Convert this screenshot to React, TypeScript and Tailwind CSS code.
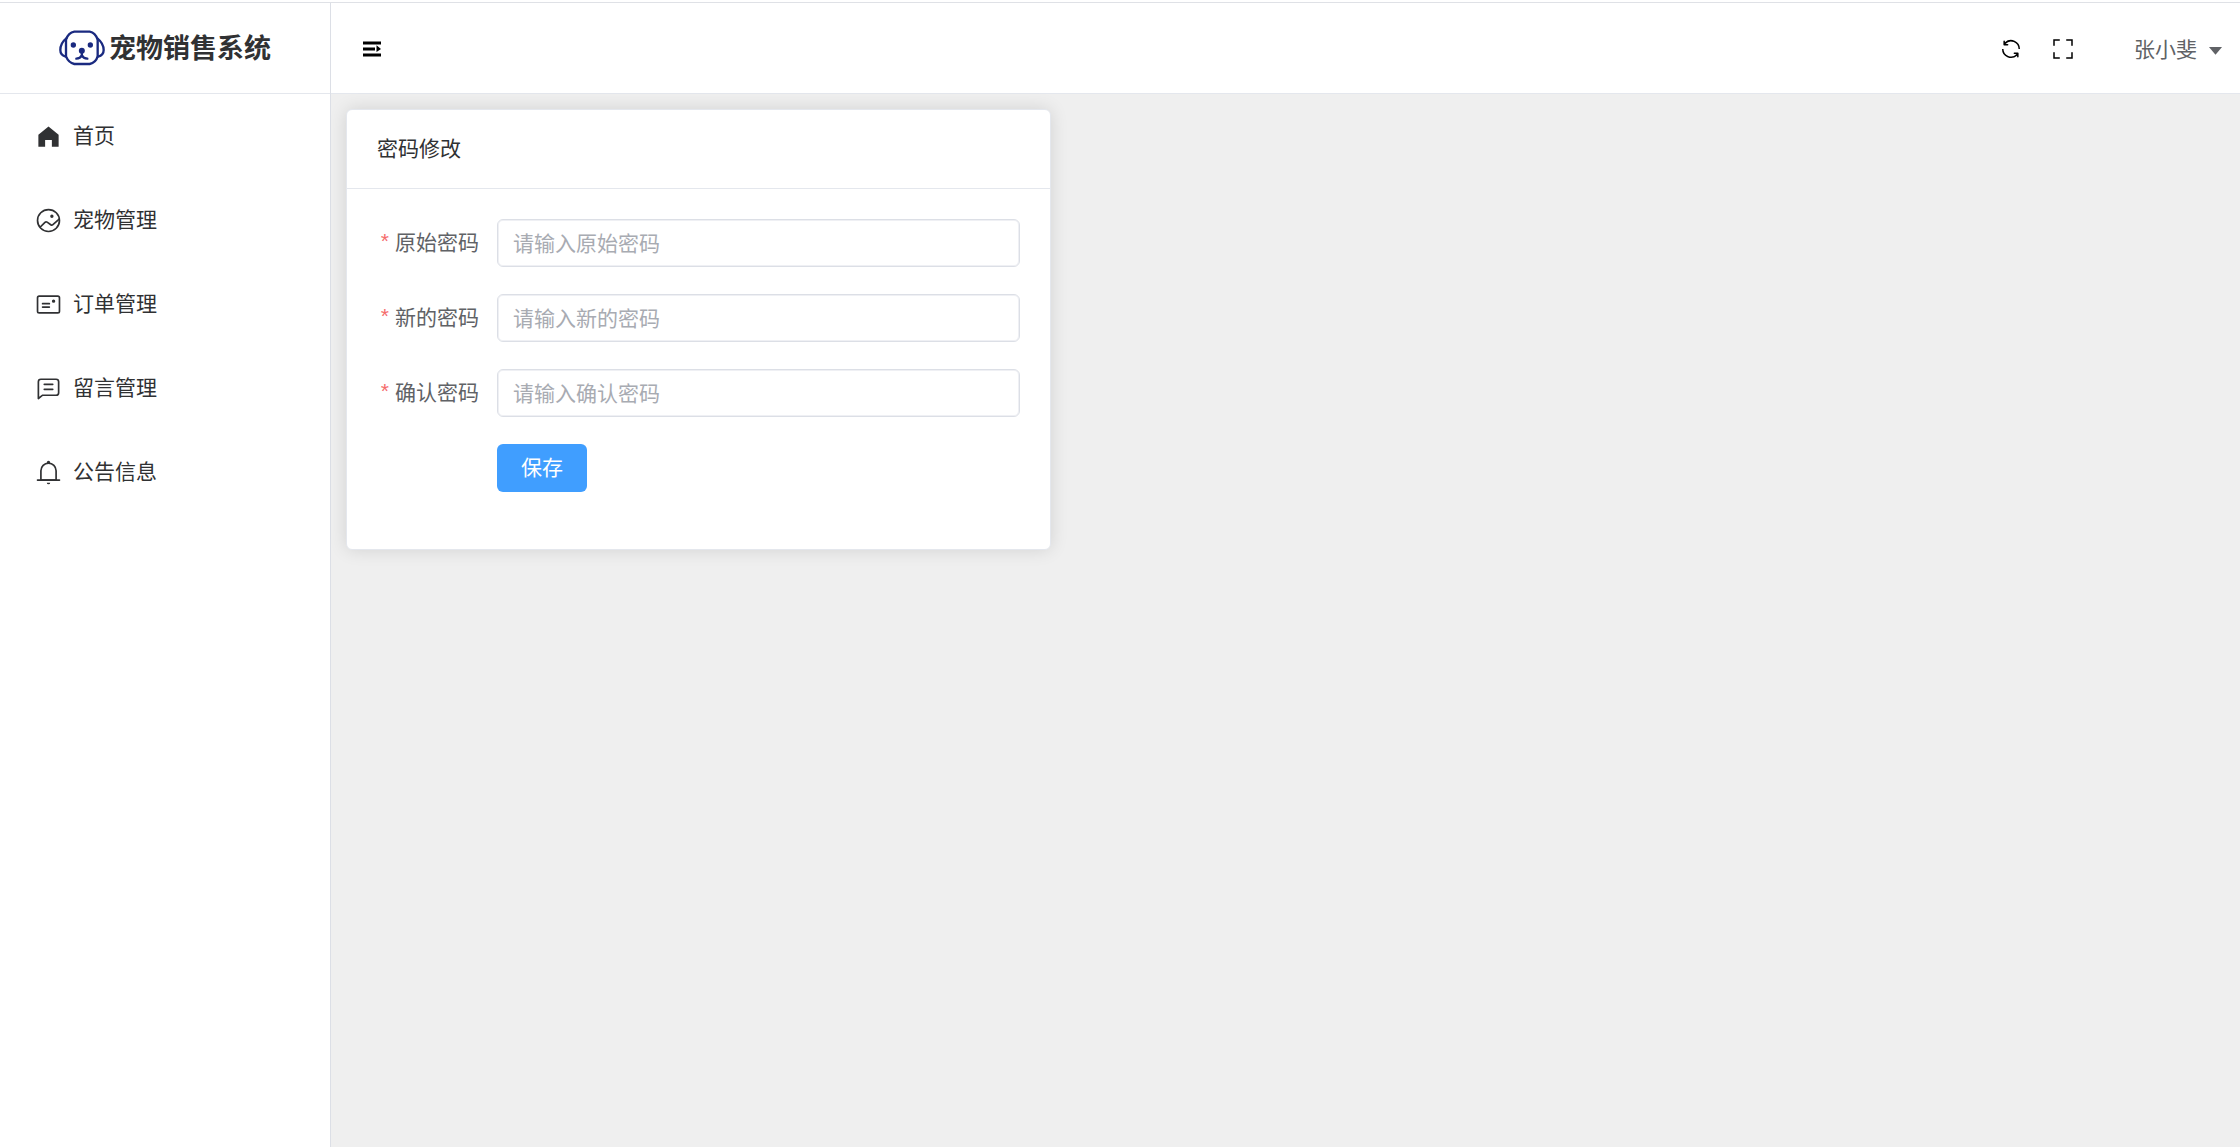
import React from "react";

const menuItems = [
  {
    label: "首页",
    paths: [
      "M512 128 128 447.936V896h255.936V640H640v256h255.936V447.936z",
    ],
  },
  {
    label: "宠物管理",
    paths: [
      "M512 128a384 384 0 1 0 0 768 384 384 0 0 0 0-768m0-64a448 448 0 1 1 0 896 448 448 0 0 1 0-896",
      "M640 288q64 0 64 64t-64 64q-64 0-64-64t64-64M214.656 790.656l-45.312-45.312 185.664-185.6a96 96 0 0 1 123.712-10.24l138.24 98.688a32 32 0 0 0 39.872-2.176L906.688 422.4l42.624 47.744L699.52 693.696a96 96 0 0 1-119.808 6.592l-138.24-98.752a32 32 0 0 0-41.152 3.456l-185.664 185.6z",
    ],
  },
  {
    label: "订单管理",
    paths: [
      "M160 224a32 32 0 0 0-32 32v512a32 32 0 0 0 32 32h704a32 32 0 0 0 32-32V256a32 32 0 0 0-32-32zm0-64h704a96 96 0 0 1 96 96v512a96 96 0 0 1-96 96H160a96 96 0 0 1-96-96V256a96 96 0 0 1 96-96",
      "M704 320a64 64 0 1 1 0 128 64 64 0 0 1 0-128M288 448h256q32 0 32 32t-32 32H288q-32 0-32-32t32-32m0 128h256q32 0 32 32t-32 32H288q-32 0-32-32t32-32",
    ],
  },
  {
    label: "留言管理",
    paths: [
      "M160 826.88 273.536 736H800a64 64 0 0 0 64-64V256a64 64 0 0 0-64-64H224a64 64 0 0 0-64 64zM296 800 147.968 918.4A32 32 0 0 1 96 893.44V256a128 128 0 0 1 128-128h576a128 128 0 0 1 128 128v416a128 128 0 0 1-128 128z",
      "M352 512h320q32 0 32 32t-32 32H352q-32 0-32-32t32-32m0-192h320q32 0 32 32t-32 32H352q-32 0-32-32t32-32",
    ],
  },
  {
    label: "公告信息",
    paths: [
      "M512 64a64 64 0 0 1 64 64v64H448v-64a64 64 0 0 1 64-64",
      "M256 768h512V448a256 256 0 1 0-512 0zm256-640a320 320 0 0 1 320 320v384H192V448a320 320 0 0 1 320-320",
      "M96 768h832q32 0 32 32t-32 32H96q-32 0-32-32t32-32m352 128h128a64 64 0 0 1-128 0",
    ],
  },
];

const expandIcon = [
  "M128 192h768v128H128zm0 256h512v128H128zm0 256h768v128H128zm576-352 192 160-192 128z",
];
const refreshIcon = [
  "M771.776 794.88A384 384 0 0 1 128 512h64a320 320 0 0 0 555.712 216.448H654.72a32 32 0 1 1 0-64h149.056a32 32 0 0 1 32 32v148.928a32 32 0 1 1-64 0v-50.56zM276.288 295.616h92.992a32 32 0 0 1 0 64H220.16a32 32 0 0 1-32-32V178.56a32 32 0 0 1 64 0v50.56A384 384 0 0 1 896.128 512h-64a320 320 0 0 0-555.776-216.384z",
];
const fullScreenIcon = [
  "m160 96.064 192 .192a32 32 0 0 1 0 64l-192-.192V352a32 32 0 0 1-64 0V96h64zm0 831.872V928H96V672a32 32 0 1 1 64 0v191.936l192-.192a32 32 0 1 1 0 64zM864 96.064V96h64v256a32 32 0 1 1-64 0V160.064l-192 .192a32 32 0 1 1 0-64zm0 831.872-192-.192a32 32 0 0 1 0-64l192 .192V672a32 32 0 1 1 64 0v256h-64z",
];
const caretIcon = ["m192 384 320 384 320-384z"];

const fields = [
  { id: "oldPassword", label: "原始密码", placeholder: "请输入原始密码" },
  { id: "newPassword", label: "新的密码", placeholder: "请输入新的密码" },
  { id: "confirmPassword", label: "确认密码", placeholder: "请输入确认密码" },
];

const Icon: React.FC<{ paths: string[]; className: string }> = ({
  paths,
  className,
}) => (
  <svg
    className={className}
    viewBox="0 0 1024 1024"
    fill="currentColor"
    aria-hidden="true"
  >
    {paths.map((d) => (
      <path key={d} d={d} />
    ))}
  </svg>
);

const DogLogo: React.FC = () => (
  <svg
    className="h-9 w-[46px] shrink-0"
    viewBox="0 0 138 108"
    fill="none"
    stroke="#1a2a80"
    strokeWidth="7"
    strokeLinecap="round"
    aria-hidden="true"
  >
    <path d="M46 5H92C104 7 112 17 116 29V79C113 89 105 99 92 102H46C33 99 25 89 21 79V29C25 17 33 7 46 5Z" />
    <path d="M22 25C12 33 4 46 4 60C4 69 10 77 20 80" />
    <path d="M115 25C125 33 134 46 134 60C134 69 128 77 117 80" />
    <circle cx="43" cy="45" r="8" fill="#1a2a80" stroke="none" />
    <circle cx="94" cy="45" r="8" fill="#1a2a80" stroke="none" />
    <circle cx="68.500" cy="62" r="9" fill="#1a2a80" stroke="none" />
    <path d="M68.500 64V76M52 86Q64 86 68.500 76Q73 86 85 86" />
  </svg>
);

const Sidebar: React.FC = () => {
  return (
    <aside className="w-[331px] shrink-0 border-r border-[#dcdfe6] bg-white">
      <div className="flex h-[91px] items-center justify-center gap-1 border-b border-[#e4e7ed] pb-px">
        <DogLogo />
        <h1 className="text-[27px] font-bold">宠物销售系统</h1>
      </div>
      <nav>
        {menuItems.map((item) => (
          <a
            key={item.label}
            href="#"
            className="flex h-[84px] items-center px-[30px]"
          >
            <span className="mr-[7px] flex w-9 justify-center">
              <Icon paths={item.paths} className="size-[27px]" />
            </span>
            <span className="pb-0.5">{item.label}</span>
          </a>
        ))}
      </nav>
    </aside>
  );
};

const Header: React.FC = () => {
  return (
    <header className="flex h-[91px] items-center border-b border-[#e4e7ed] bg-white pt-0.5 pr-[14px] pl-[29px]">
      <button type="button" aria-label="展开菜单" className="text-black">
        <Icon paths={expandIcon} className="size-6" />
      </button>
      <div className="ml-auto flex items-center text-black">
        <button type="button" aria-label="刷新" className="mr-7">
          <Icon paths={refreshIcon} className="size-6" />
        </button>
        <button type="button" aria-label="全屏" className="mr-[59px]">
          <Icon paths={fullScreenIcon} className="size-6" />
        </button>
        <button
          type="button"
          className="flex items-center gap-2 text-[#606266]"
        >
          张小斐
          <Icon paths={caretIcon} className="size-[21px]" />
        </button>
      </div>
    </header>
  );
};

const PasswordForm: React.FC = () => {
  return (
    <section className="w-3/8 rounded-md border border-[#e4e7ed] bg-white shadow-[0_0_18px_rgba(0,0,0,0.12)]">
      <h2 className="border-b border-[#e4e7ed] px-[30px] pt-[22px] pb-[26px] leading-[30px]">
        密码修改
      </h2>
      <form className="space-y-[27px] px-[30px] pt-[30px] pb-[57px]">
        {fields.map((field) => (
          <div key={field.id} className="flex">
            <label
              htmlFor={field.id}
              className="flex h-12 w-30 shrink-0 items-center justify-end pr-[18px] pb-0.5 text-[#606266]"
            >
              <span className="mr-1.5 pb-0.5 font-['Liberation_Sans',sans-serif] text-[#f56c6c]">
                *
              </span>
              {field.label}
            </label>
            <input
              id={field.id}
              type="password"
              placeholder={field.placeholder}
              className="h-12 min-w-0 flex-1 rounded-md border border-[#dcdfe6] px-[15px] pb-0.5 shadow-[inset_0_0_0_1px_#eff0f4] outline-none placeholder:text-[#a8abb2] focus:border-[#409eff]"
            />
          </div>
        ))}
        <div className="pl-30">
          <button
            type="submit"
            className="h-12 rounded-md bg-[#409eff] px-6 pb-0.5 text-white"
          >
            保存
          </button>
        </div>
      </form>
    </section>
  );
};

const App: React.FC = () => {
  return (
    <div className="flex min-h-screen flex-col bg-white font-['Noto_Sans_CJK_SC',sans-serif] text-[21px] text-[#303133]">
      <div className="h-[3px] border-b border-[#dfe1e6]" />
      <div className="flex flex-1">
        <Sidebar />
        <div className="flex min-w-0 flex-1 flex-col">
          <Header />
          <main className="flex-1 bg-[#efefef] p-[15px]">
            <PasswordForm />
          </main>
        </div>
      </div>
    </div>
  );
};

export default App;
